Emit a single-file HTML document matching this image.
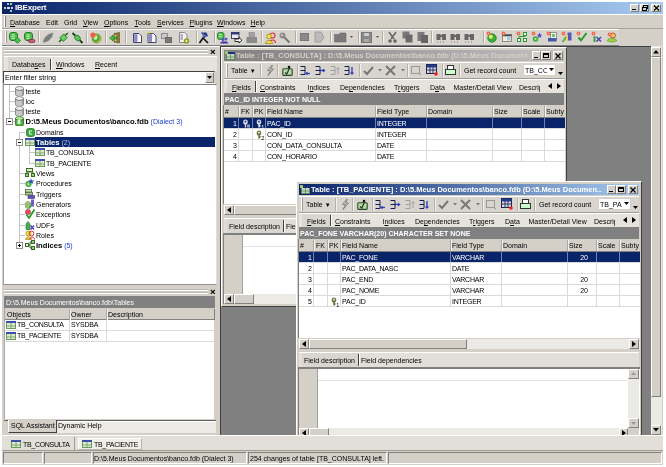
<!DOCTYPE html>
<html><head><meta charset="utf-8"><style>
html,body{margin:0;padding:0;width:666px;height:467px;overflow:hidden;background:#fff}
body{position:relative;font-family:"Liberation Sans",sans-serif;font-size:7px;color:#000}
div{position:absolute;box-sizing:border-box}
.t{white-space:nowrap}
u{text-decoration:underline;text-underline-offset:1px}
</style></head><body>
<div style="left:0;top:0;width:666px;height:467px;filter:blur(0.3px)">
<div style="left:2px;top:2px;width:661px;height:463px;background:#D4D0C8"></div>
<div style="left:2px;top:2px;width:661px;height:12px;background:linear-gradient(to right,#0A246A,#A6CAF0)"></div>
<svg style="position:absolute;left:3px;top:3px" width="11" height="10" viewBox="0 0 11 10"><rect x="4" y="0" width="2" height="2" fill="#9bd"/><rect x="7" y="0" width="2" height="2" fill="#9d9"/><rect x="1" y="4" width="2" height="2" fill="#bcd"/><rect x="4" y="4" width="3" height="2" fill="#dde"/><rect x="8" y="4" width="2" height="2" fill="#ccf"/><rect x="7" y="7" width="2" height="2" fill="#9c9"/></svg>
<div class="t" style="left:15px;top:2px;height:12px;line-height:12px;color:#fff;font-size:8px;letter-spacing:-0.2px"><b>IBExpert</b></div>
<div style="left:630px;top:4px;width:9px;height:8px;border:1px solid;border-color:#fff #808080 #808080 #fff;background:#D4D0C8;"></div>
<div style="left:640px;top:4px;width:9px;height:8px;border:1px solid;border-color:#fff #808080 #808080 #fff;background:#D4D0C8;"></div>
<div style="left:651px;top:4px;width:10px;height:8px;border:1px solid;border-color:#fff #808080 #808080 #fff;background:#D4D0C8;"></div>
<div style="left:632px;top:9px;width:4px;height:1px;background:#000"></div>
<svg style="position:absolute;left:642px;top:5px" width="6" height="6" viewBox="0 0 6 6"><rect x="1.5" y="0.5" width="4" height="3" fill="none" stroke="#000" stroke-width="1"/><rect x="0.5" y="2.5" width="4" height="3" fill="#D4D0C8" stroke="#000" stroke-width="1"/></svg>
<svg style="position:absolute;left:653px;top:5px" width="7" height="6" viewBox="0 0 7 6"><path d="M1 0.5L6 5.5M6 0.5L1 5.5" stroke="#000" stroke-width="1.1"/></svg>
<div style="left:2px;top:14px;width:661px;height:1px;background:#fff"></div>
<div style="left:2px;top:28px;width:661px;height:1px;background:#A8A49C"></div>
<div style="left:4px;top:16px;width:1px;height:11px;background:#fff"></div>
<div style="left:5px;top:16px;width:1px;height:11px;background:#808080"></div>
<div class="t" style="left:10px;top:18px;height:10px;line-height:10px;"><u>D</u>atabase</div>
<div class="t" style="left:46px;top:18px;height:10px;line-height:10px;">Edit</div>
<div class="t" style="left:64px;top:18px;height:10px;line-height:10px;">Grid</div>
<div class="t" style="left:83px;top:18px;height:10px;line-height:10px;"><u>V</u>iew</div>
<div class="t" style="left:104px;top:18px;height:10px;line-height:10px;"><u>O</u>ptions</div>
<div class="t" style="left:134.5px;top:18px;height:10px;line-height:10px;"><u>T</u>ools</div>
<div class="t" style="left:157px;top:18px;height:10px;line-height:10px;"><u>S</u>ervices</div>
<div class="t" style="left:189.5px;top:18px;height:10px;line-height:10px;"><u>P</u>lugins</div>
<div class="t" style="left:217px;top:18px;height:10px;line-height:10px;"><u>W</u>indows</div>
<div class="t" style="left:250.5px;top:18px;height:10px;line-height:10px;"><u>H</u>elp</div>
<div style="left:2px;top:29px;width:617px;height:17px;border-top:1px solid #fff;border-bottom:1px solid #808080;background:#D8D5CE"></div>
<div style="left:5px;top:31px;width:1px;height:12px;background:#fff"></div>
<div style="left:6px;top:31px;width:1px;height:12px;background:#9a968e"></div>
<div style="left:38px;top:31px;width:1px;height:12px;background:#B0ACA4"></div>
<div style="left:39px;top:31px;width:1px;height:12px;background:#F4F2EE"></div>
<div style="left:86px;top:31px;width:1px;height:12px;background:#B0ACA4"></div>
<div style="left:87px;top:31px;width:1px;height:12px;background:#F4F2EE"></div>
<div style="left:105px;top:31px;width:1px;height:12px;background:#B0ACA4"></div>
<div style="left:106px;top:31px;width:1px;height:12px;background:#F4F2EE"></div>
<div style="left:125px;top:31px;width:1px;height:12px;background:#B0ACA4"></div>
<div style="left:126px;top:31px;width:1px;height:12px;background:#F4F2EE"></div>
<div style="left:196px;top:31px;width:1px;height:12px;background:#B0ACA4"></div>
<div style="left:197px;top:31px;width:1px;height:12px;background:#F4F2EE"></div>
<div style="left:214px;top:31px;width:1px;height:12px;background:#B0ACA4"></div>
<div style="left:215px;top:31px;width:1px;height:12px;background:#F4F2EE"></div>
<div style="left:261px;top:31px;width:1px;height:12px;background:#B0ACA4"></div>
<div style="left:262px;top:31px;width:1px;height:12px;background:#F4F2EE"></div>
<div style="left:295px;top:31px;width:1px;height:12px;background:#B0ACA4"></div>
<div style="left:296px;top:31px;width:1px;height:12px;background:#F4F2EE"></div>
<div style="left:330px;top:31px;width:1px;height:12px;background:#B0ACA4"></div>
<div style="left:331px;top:31px;width:1px;height:12px;background:#F4F2EE"></div>
<div style="left:358px;top:31px;width:1px;height:12px;background:#B0ACA4"></div>
<div style="left:359px;top:31px;width:1px;height:12px;background:#F4F2EE"></div>
<div style="left:382px;top:31px;width:1px;height:12px;background:#B0ACA4"></div>
<div style="left:383px;top:31px;width:1px;height:12px;background:#F4F2EE"></div>
<div style="left:431px;top:31px;width:1px;height:12px;background:#B0ACA4"></div>
<div style="left:432px;top:31px;width:1px;height:12px;background:#F4F2EE"></div>
<div style="left:483px;top:31px;width:1px;height:12px;background:#B0ACA4"></div>
<div style="left:484px;top:31px;width:1px;height:12px;background:#F4F2EE"></div>
<svg style="position:absolute;left:9px;top:32px" width="12" height="12" viewBox="0 0 12 12"><rect x="0.5" y="0.5" width="8" height="8" rx="2.5" fill="#4cbf4c" stroke="#1d741d" stroke-width="0.9"/><path d="M2.5 2.8h3.2M2.5 4.6h3.2M2.5 6.4h3.2" stroke="#d4f4c8" stroke-width="0.9"/><path d="M5.5 8.5l3-3 3 3-3 3z" fill="#46c046" stroke="#1d741d" stroke-width="0.7"/></svg>
<svg style="position:absolute;left:24px;top:32px" width="12" height="12" viewBox="0 0 12 12"><rect x="0.5" y="0.5" width="8" height="8" rx="2.5" fill="#4cbf4c" stroke="#1d741d" stroke-width="0.9"/><path d="M2.5 2.8h3.2M2.5 4.6h3.2M2.5 6.4h3.2" stroke="#d4f4c8" stroke-width="0.9"/><rect x="4.5" y="7.5" width="6.5" height="3" rx="1.5" fill="#c8607a" stroke="#7a2038" stroke-width="0.7"/></svg>
<svg style="position:absolute;left:42px;top:32px" width="12" height="12" viewBox="0 0 12 12"><path d="M1 10.5C2 5 6 1.5 11 1C10.5 6 7 9.8 1 10.5Z" fill="#7c7c7c" stroke="#9a9a9a" stroke-width="0.6"/></svg>
<svg style="position:absolute;left:58px;top:32px" width="12" height="12" viewBox="0 0 12 12"><path d="M1 10L4 7M7 3.5L10 1" stroke="#1d6a1d" stroke-width="1.6"/><rect x="3" y="3" width="5" height="5.5" transform="rotate(45 5.5 5.75)" fill="#6ad06a" stroke="#1d6a1d" stroke-width="0.8"/></svg>
<svg style="position:absolute;left:72px;top:32px" width="12" height="12" viewBox="0 0 12 12"><path d="M0.5 1L3 3.5M8 8.5L10.5 11" stroke="#1a3a1a" stroke-width="1.8"/><ellipse cx="5.5" cy="6" rx="3.2" ry="2.4" transform="rotate(45 5.5 6)" fill="#5cc85c" stroke="#1d6a1d" stroke-width="0.8"/></svg>
<svg style="position:absolute;left:90px;top:32px" width="12" height="12" viewBox="0 0 12 12"><ellipse cx="6.5" cy="6.5" rx="4.5" ry="4.5" fill="#d8c040" stroke="#6a7a20" stroke-width="0.7"/><ellipse cx="6" cy="6" rx="3.5" ry="3.8" fill="#3aa83a"/><ellipse cx="5.5" cy="5.5" rx="2" ry="2.4" fill="#c8f0a8"/><circle cx="3" cy="3" r="2.6" fill="#f06040"/></svg>
<svg style="position:absolute;left:109px;top:32px" width="12" height="12" viewBox="0 0 12 12"><path d="M5 1.5L10.5 0.5V11L5 10Z" fill="#8a7a3a" stroke="#5a4a1a" stroke-width="0.6"/><path d="M6.5 3v6" stroke="#e8d870" stroke-width="1.5"/><path d="M0.5 6L4 3V5H8V7H4V9Z" fill="#46c046" stroke="#1d6a1d" stroke-width="0.6"/></svg>
<svg style="position:absolute;left:133px;top:32px" width="12" height="12" viewBox="0 0 12 12"><path d="M0.5 1.5H6L8.5 4V10.5H0.5Z" fill="#fff" stroke="#303060" stroke-width="0.9"/><rect x="1.2" y="2.2" width="3.3" height="7.6" fill="#8a86c8"/></svg>
<svg style="position:absolute;left:147px;top:31px" width="12" height="12" viewBox="0 0 12 12"><g transform="translate(0.5 1)"><path d="M0.5 1.5H6L8.5 4V10.5H0.5Z" fill="#fff" stroke="#303060" stroke-width="0.9"/><rect x="1.2" y="2.2" width="3.3" height="7.6" fill="#8a86c8"/></g><path d="M2 0V3M0.5 1.5H3.5" stroke="#e8d840" stroke-width="1"/></svg>
<svg style="position:absolute;left:161px;top:33px" width="12" height="12" viewBox="0 0 12 12"><rect x="0.5" y="0.5" width="6" height="5" fill="#c8c8c8" stroke="#8a8a8a"/><rect x="4.5" y="4.5" width="6" height="5" fill="#7a7a7a" stroke="#6a6a6a"/></svg>
<svg style="position:absolute;left:179px;top:32px" width="12" height="12" viewBox="0 0 12 12"><path d="M0.5 0.5H5.5L8 3V10.5H0.5Z" fill="#f4f4f0" stroke="#707070" stroke-width="0.8"/><rect x="1.5" y="2" width="2.5" height="6" fill="#b0b0c8"/><circle cx="7.5" cy="9" r="2.3" fill="#b8c020" stroke="#607010" stroke-width="0.7"/><circle cx="7.5" cy="9" r="0.8" fill="#fff"/></svg>
<svg style="position:absolute;left:199px;top:32px" width="12" height="12" viewBox="0 0 12 12"><path d="M2 0.5L7.5 0.5L9 4L5 6Z" fill="#2a3a8a"/><path d="M3 2L8 5" stroke="#a0a8e0" stroke-width="0.8"/><path d="M0.5 11L4 6L6 8L9 11" stroke="#101010" stroke-width="1.6" fill="none"/></svg>
<svg style="position:absolute;left:217px;top:32px" width="12" height="12" viewBox="0 0 12 12"><rect x="0.5" y="0.5" width="6.5" height="7" rx="2" fill="#4cbf4c" stroke="#1d741d" stroke-width="0.8"/><path d="M2 2.5h3M2 4.5h3" stroke="#d4f4c8" stroke-width="0.8"/><circle cx="6" cy="7.5" r="1.6" fill="#5a50c8"/><circle cx="9" cy="7" r="1.5" fill="#5a50c8"/><path d="M3.5 11.5C3.5 9 8.5 9 8.5 11.5M6.5 11.5C6.5 9 11 9 11 11.5" fill="#4a40b8" stroke="#2a2080" stroke-width="0.5"/></svg>
<svg style="position:absolute;left:231px;top:32px" width="12" height="12" viewBox="0 0 12 12"><rect x="0.5" y="0.5" width="7.5" height="6" fill="#e8e8f0" stroke="#202040" stroke-width="0.8"/><rect x="0.5" y="0.5" width="7.5" height="2" fill="#303880"/><path d="M4 7H8V5.5L11 8.2L8 11V9.5H4Z" fill="#fff" stroke="#000" stroke-width="0.8"/></svg>
<svg style="position:absolute;left:246px;top:32px" width="12" height="12" viewBox="0 0 12 12"><rect x="3" y="0.5" width="5.5" height="5" fill="#a0a0a0" stroke="#8a8a8a" stroke-width="0.6"/><rect x="0.5" y="5" width="10.5" height="6" fill="#8a8a8a"/></svg>
<svg style="position:absolute;left:265px;top:32px" width="12" height="12" viewBox="0 0 12 12"><circle cx="7.5" cy="3.5" r="2.5" fill="none" stroke="#e03030" stroke-width="1.2"/><path d="M4.5 11C4.5 7 10.5 7 10.5 11" fill="none" stroke="#e03030" stroke-width="1.2"/><circle cx="4" cy="4.5" r="2.4" fill="#f0e040" stroke="#807010" stroke-width="0.6"/><path d="M0.5 11.5C0.5 7.5 7.5 7.5 7.5 11.5Z" fill="#f0e040" stroke="#807010" stroke-width="0.6"/></svg>
<svg style="position:absolute;left:279px;top:32px" width="12" height="12" viewBox="0 0 12 12"><circle cx="3.5" cy="3.5" r="3" fill="#8a8a8a"/><circle cx="3" cy="3" r="1.2" fill="#c0c0c0"/><path d="M5.5 5.5L10.5 10.5" stroke="#7a7a7a" stroke-width="2.2"/></svg>
<svg style="position:absolute;left:299px;top:31px" width="12" height="12" viewBox="0 0 12 12"><rect x="1.5" y="2.5" width="8" height="7" fill="#8a8a8a" stroke="#777"/></svg>
<svg style="position:absolute;left:314px;top:31px" width="12" height="12" viewBox="0 0 12 12"><path d="M1 1H7L10 6L7 11H1Z" fill="#bbb" stroke="#999" stroke-width="0.8"/></svg>
<svg style="position:absolute;left:334px;top:31px" width="13" height="12" viewBox="0 0 13 12"><path d="M0.5 3.5H5L6 2H12V11H0.5Z" fill="#7a7a7a" stroke="#6a6a6a" stroke-width="0.6"/></svg>
<svg style="position:absolute;left:350px;top:31px" width="4" height="12" viewBox="0 0 4 12"><path d="M0 5h3l-1.5 2z" fill="#555"/></svg>
<svg style="position:absolute;left:361px;top:31px" width="12" height="12" viewBox="0 0 12 12"><rect x="0.5" y="1.5" width="10" height="10" fill="#888" stroke="#777"/><rect x="3" y="2" width="5" height="3" fill="#ccc"/><rect x="3" y="8" width="5" height="3" fill="#aaa"/></svg>
<svg style="position:absolute;left:376px;top:31px" width="4" height="12" viewBox="0 0 4 12"><path d="M0 5h3l-1.5 2z" fill="#555"/></svg>
<svg style="position:absolute;left:387px;top:31px" width="11" height="12" viewBox="0 0 11 12"><path d="M2 1L7 8M9 1L4 8" stroke="#666" stroke-width="1.5"/><circle cx="3" cy="10" r="1.8" fill="#666"/><circle cx="8" cy="10" r="1.8" fill="#666"/></svg>
<svg style="position:absolute;left:402px;top:31px" width="11" height="12" viewBox="0 0 11 12"><rect x="0.5" y="0.5" width="7" height="7" fill="#777"/><rect x="3.5" y="3.5" width="7" height="8" fill="#6a6a6a"/></svg>
<svg style="position:absolute;left:417px;top:31px" width="11" height="12" viewBox="0 0 11 12"><rect x="0.5" y="1" width="7" height="9" fill="#7a7a7a"/><rect x="4" y="4" width="7" height="8" fill="#666"/></svg>
<svg style="position:absolute;left:436px;top:31px" width="11" height="12" viewBox="0 0 11 12"><rect x="0.5" y="3" width="4" height="6" fill="#666"/><rect x="6" y="3" width="4" height="6" fill="#666"/><rect x="3" y="4" width="4" height="2" fill="#666"/><path d="M1 11h1M4 11h1M7 11h1" stroke="#777"/></svg>
<svg style="position:absolute;left:450px;top:31px" width="11" height="12" viewBox="0 0 11 12"><rect x="0.5" y="3" width="4" height="6" fill="#666"/><rect x="6" y="3" width="4" height="6" fill="#666"/><rect x="3" y="4" width="4" height="2" fill="#666"/><path d="M1 11h1M4 11h1M7 11h1" stroke="#777"/></svg>
<svg style="position:absolute;left:464px;top:31px" width="11" height="12" viewBox="0 0 11 12"><rect x="0.5" y="3" width="4" height="6" fill="#666"/><rect x="6" y="3" width="4" height="6" fill="#666"/><rect x="3" y="4" width="4" height="2" fill="#666"/><path d="M1 11h1M4 11h1M7 11h1" stroke="#777"/></svg>
<svg style="position:absolute;left:486px;top:31px" width="12" height="12" viewBox="0 0 12 12"><circle cx="6" cy="7" r="4.3" fill="#38b038" stroke="#1a6a2a" stroke-width="0.6"/><circle cx="4.8" cy="5.8" r="2" fill="#e8f070"/><circle cx="2.5" cy="2.5" r="1.9" fill="#f06848"/><circle cx="2.5" cy="2.5" r="0.7" fill="#ffb090"/></svg>
<svg style="position:absolute;left:501px;top:31px" width="12" height="12" viewBox="0 0 12 12"><rect x="1.5" y="3.5" width="9" height="7" fill="#f4f0d8" stroke="#6a6a5a" stroke-width="0.7"/><rect x="1.5" y="3.5" width="9" height="1.8" fill="#4a4a6a"/><rect x="6" y="6" width="3.5" height="3.5" fill="#a8c8e0"/><circle cx="2.5" cy="2.5" r="1.9" fill="#f06848"/><circle cx="2.5" cy="2.5" r="0.7" fill="#ffb090"/></svg>
<svg style="position:absolute;left:516px;top:31px" width="12" height="12" viewBox="0 0 12 12"><rect x="1.5" y="7.5" width="3" height="3" fill="#fff" stroke="#2a9a2a"/><rect x="7.5" y="7.5" width="3" height="3" fill="#fff" stroke="#2a9a2a"/><rect x="7.5" y="1.5" width="3" height="3" fill="#fff" stroke="#2a9a2a"/><path d="M3 7.5V5.5H9V4.5" stroke="#2a9a2a" fill="none"/><circle cx="2.5" cy="2.5" r="1.9" fill="#f06848"/><circle cx="2.5" cy="2.5" r="0.7" fill="#ffb090"/></svg>
<svg style="position:absolute;left:531px;top:31px" width="12" height="12" viewBox="0 0 12 12"><circle cx="4.5" cy="8" r="2.8" fill="#40b040"/><circle cx="4.5" cy="8" r="1" fill="#c0f0a0"/><path d="M8.5 1.5L9.3 3.5L11.3 3.7L9.8 5L10.3 7L8.5 6L6.7 7L7.2 5L5.7 3.7L7.7 3.5Z" fill="#5a48c8"/><circle cx="2.5" cy="2.5" r="1.9" fill="#f06848"/><circle cx="2.5" cy="2.5" r="0.7" fill="#ffb090"/></svg>
<svg style="position:absolute;left:546px;top:31px" width="12" height="12" viewBox="0 0 12 12"><rect x="4.5" y="1.5" width="6" height="8" fill="#f0f8f0" stroke="#5a5a5a" stroke-width="0.6"/><rect x="2" y="7" width="8.5" height="3.5" fill="#4858a8"/><rect x="6" y="3" width="3" height="3" fill="#70c070"/><circle cx="2.5" cy="2.5" r="1.9" fill="#f06848"/><circle cx="2.5" cy="2.5" r="0.7" fill="#ffb090"/></svg>
<svg style="position:absolute;left:561px;top:31px" width="12" height="12" viewBox="0 0 12 12"><rect x="6.5" y="1.5" width="4" height="8" fill="#5858b8"/><rect x="4" y="4" width="3" height="6" fill="#e8d070"/><path d="M1.5 11L5 6" stroke="#58b048" stroke-width="1.8"/><circle cx="2.5" cy="2.5" r="1.9" fill="#f06848"/><circle cx="2.5" cy="2.5" r="0.7" fill="#ffb090"/></svg>
<svg style="position:absolute;left:576px;top:31px" width="12" height="12" viewBox="0 0 12 12"><path d="M2.5 6.5L5 9.5L10.5 2" stroke="#2a9a2a" stroke-width="2" fill="none"/><circle cx="2.5" cy="2.5" r="1.9" fill="#f06848"/><circle cx="2.5" cy="2.5" r="0.7" fill="#ffb090"/></svg>
<svg style="position:absolute;left:591px;top:31px" width="12" height="12" viewBox="0 0 12 12"><path d="M5.5 6L10 10.5M10 6L5.5 10.5" stroke="#5040b8" stroke-width="1.6"/><rect x="2.5" y="5" width="2" height="6" fill="#38a838"/><circle cx="2.5" cy="2.5" r="1.9" fill="#f06848"/><circle cx="2.5" cy="2.5" r="0.7" fill="#ffb090"/></svg>
<svg style="position:absolute;left:606px;top:31px" width="12" height="12" viewBox="0 0 12 12"><path d="M1 9.5C3 6.5 8 6.5 11 9.5C8 11.5 4 11.5 1 9.5Z" fill="#a8d040" stroke="#3a9a2a" stroke-width="0.6"/><circle cx="7" cy="4.5" r="2.6" fill="#f0c060" stroke="#b03030" stroke-width="0.7"/><circle cx="3.5" cy="3.5" r="1.9" fill="#f06848"/><circle cx="3.5" cy="3.5" r="0.7" fill="#ffb090"/></svg>
<div style="left:2px;top:46px;width:218px;height:1px;background:#fff"></div>
<div style="left:4px;top:49px;width:204px;height:1px;background:#BCB8B0"></div>
<div style="left:4px;top:50px;width:204px;height:1px;background:#fff"></div>
<div style="left:4px;top:52px;width:204px;height:1px;background:#BCB8B0"></div>
<div style="left:4px;top:53px;width:204px;height:1px;background:#fff"></div>
<svg style="position:absolute;left:210px;top:49px" width="6" height="6" viewBox="0 0 6 6"><path d="M0.8 0.8L4.8 4.8M4.8 0.8L0.8 4.8" stroke="#000" stroke-width="1.1"/></svg>
<div style="left:4px;top:56px;width:213px;height:15px;background:#E6E3DC;border-top:1px solid #fff"></div>
<div style="left:8px;top:57px;width:42px;height:14px;background:#D9D6CF"></div>
<div style="left:50px;top:59px;width:1px;height:11px;background:#404040"></div>
<div style="left:51px;top:59px;width:1px;height:11px;background:#fff"></div>
<div class="t" style="left:12px;top:59px;height:11px;line-height:11px;">Databa<u>s</u>es</div>
<div class="t" style="left:56px;top:59px;height:11px;line-height:11px;"><u>W</u>indows</div>
<div class="t" style="left:95px;top:59px;height:11px;line-height:11px;"><u>R</u>ecent</div>
<div style="left:3px;top:71px;width:212px;height:13px;background:#fff;border:1px solid;border-color:#404040 #D4D0C8 #fff #404040"></div>
<div class="t" style="left:5px;top:72px;height:11px;line-height:11px;">Enter filter string</div>
<div style="left:205px;top:72px;width:9px;height:11px;border:1px solid;border-color:#fff #808080 #808080 #fff;background:#D4D0C8;"></div>
<svg style="position:absolute;left:207px;top:76px" width="5" height="3" viewBox="0 0 5 3"><path d="M0 0h5l-2.5 3z" fill="#000"/></svg>
<div style="left:3px;top:84px;width:214px;height:201px;background:#fff;border:1px solid;border-color:#808080 #E0DED8 #909090 #A0A0A0"></div>
<div style="left:9px;top:85px;width:1px;height:36px;background:#C4C4C4"></div>
<div style="left:9px;top:91px;width:6px;height:1px;background:#C4C4C4"></div>
<div style="left:9px;top:101px;width:6px;height:1px;background:#C4C4C4"></div>
<div style="left:9px;top:111px;width:6px;height:1px;background:#C4C4C4"></div>
<div style="left:9px;top:121px;width:6px;height:1px;background:#C4C4C4"></div>
<div style="left:19px;top:132px;width:1px;height:113px;background:#C4C4C4"></div>
<div style="left:19px;top:132px;width:6px;height:1px;background:#C4C4C4"></div>
<div style="left:19px;top:173px;width:6px;height:1px;background:#C4C4C4"></div>
<div style="left:19px;top:183px;width:6px;height:1px;background:#C4C4C4"></div>
<div style="left:19px;top:194px;width:6px;height:1px;background:#C4C4C4"></div>
<div style="left:19px;top:204px;width:6px;height:1px;background:#C4C4C4"></div>
<div style="left:19px;top:214px;width:6px;height:1px;background:#C4C4C4"></div>
<div style="left:19px;top:225px;width:6px;height:1px;background:#C4C4C4"></div>
<div style="left:19px;top:235px;width:6px;height:1px;background:#C4C4C4"></div>
<div style="left:29px;top:146px;width:1px;height:17px;background:#C4C4C4"></div>
<div style="left:29px;top:152px;width:6px;height:1px;background:#C4C4C4"></div>
<div style="left:29px;top:163px;width:6px;height:1px;background:#C4C4C4"></div>
<div style="left:6px;top:118px;width:7px;height:7px;background:#fff;border:1px solid #909090"></div>
<div style="left:8px;top:121px;width:3px;height:1px;background:#000"></div>
<div style="left:16px;top:139px;width:7px;height:7px;background:#fff;border:1px solid #909090"></div>
<div style="left:18px;top:142px;width:3px;height:1px;background:#000"></div>
<div style="left:16px;top:242px;width:7px;height:7px;background:#fff;border:1px solid #909090"></div>
<div style="left:18px;top:245px;width:3px;height:1px;background:#000"></div>
<div style="left:19px;top:244px;width:1px;height:3px;background:#000"></div>
<svg style="position:absolute;left:15px;top:86px" width="9" height="10" viewBox="0 0 9 10"><ellipse cx="4.5" cy="2.5" rx="4" ry="2" fill="#eee" stroke="#777" stroke-width="0.8"/><path d="M0.5 2.5V8.5A4 2 0 0 0 8.5 8.5V2.5A4 2 0 0 1 0.5 2.5Z" fill="#c8c8c8" stroke="#777" stroke-width="0.8"/><path d="M7.5 3V9" stroke="#999" stroke-width="1"/></svg>
<div class="t" style="left:25.5px;top:87px;height:10px;line-height:10px;">teste</div>
<svg style="position:absolute;left:15px;top:96px" width="9" height="10" viewBox="0 0 9 10"><ellipse cx="4.5" cy="2.5" rx="4" ry="2" fill="#eee" stroke="#777" stroke-width="0.8"/><path d="M0.5 2.5V8.5A4 2 0 0 0 8.5 8.5V2.5A4 2 0 0 1 0.5 2.5Z" fill="#c8c8c8" stroke="#777" stroke-width="0.8"/><path d="M7.5 3V9" stroke="#999" stroke-width="1"/></svg>
<div class="t" style="left:25.5px;top:97px;height:10px;line-height:10px;">loc</div>
<svg style="position:absolute;left:15px;top:106px" width="9" height="10" viewBox="0 0 9 10"><ellipse cx="4.5" cy="2.5" rx="4" ry="2" fill="#eee" stroke="#777" stroke-width="0.8"/><path d="M0.5 2.5V8.5A4 2 0 0 0 8.5 8.5V2.5A4 2 0 0 1 0.5 2.5Z" fill="#c8c8c8" stroke="#777" stroke-width="0.8"/><path d="M7.5 3V9" stroke="#999" stroke-width="1"/></svg>
<div class="t" style="left:25.5px;top:107px;height:10px;line-height:10px;">teste</div>
<svg style="position:absolute;left:15px;top:116px" width="9" height="10" viewBox="0 0 9 10"><ellipse cx="4.5" cy="2.5" rx="4" ry="2" fill="#b8e8a0" stroke="#2a6a1a" stroke-width="0.8"/><path d="M0.5 2.5V8.5A4 2 0 0 0 8.5 8.5V2.5A4 2 0 0 1 0.5 2.5Z" fill="#4caf3a" stroke="#2a6a1a" stroke-width="0.8"/><rect x="2.5" y="4" width="3" height="4" fill="#dfd"/></svg>
<div class="t" style="left:25.5px;top:117px;height:10px;line-height:10px;"><b style="font-size:7.65px">D:\5.Meus Documentos\banco.fdb</b> <span style="color:#2040c0">(Dialect 3)</span></div>
<svg style="position:absolute;left:26px;top:128px" width="9" height="9" viewBox="0 0 9 9"><rect x="0.5" y="0.5" width="8" height="8" rx="2" fill="#3cac3c" stroke="#1a6a1a" stroke-width="0.7"/><path d="M6 3H3.5V6H6" stroke="#dfd" fill="none"/></svg>
<div class="t" style="left:36px;top:128px;height:10px;line-height:10px;">Domains</div>
<svg style="position:absolute;left:25px;top:138px" width="10" height="8" viewBox="0 0 10 8"><rect x="0.5" y="0.5" width="9" height="7" fill="#dfe8d0" stroke="#6a9a5a" stroke-width="1"/><rect x="0" y="0" width="10" height="2" fill="#3c4fa8"/><path d="M5.0 2V8M0 5.0H10" stroke="#6a9a5a" stroke-width="0.8"/></svg>
<div style="left:35px;top:137px;width:180px;height:10px;background:#0A246A"></div>
<div class="t" style="left:36px;top:138px;height:10px;line-height:10px;color:#fff"><b style="font-size:7.6px">Tables</b> <span style="color:#A6CAF0">(2)</span></div>
<svg style="position:absolute;left:35px;top:148px" width="10" height="8" viewBox="0 0 10 8"><rect x="0.5" y="0.5" width="9" height="7" fill="#dfe8d0" stroke="#6a9a5a" stroke-width="1"/><rect x="0" y="0" width="10" height="2" fill="#3c4fa8"/><path d="M5.0 2V8M0 5.0H10" stroke="#6a9a5a" stroke-width="0.8"/></svg>
<div class="t" style="left:46px;top:148px;height:10px;line-height:10px;letter-spacing:-0.2px">TB_CONSULTA</div>
<svg style="position:absolute;left:35px;top:159px" width="10" height="8" viewBox="0 0 10 8"><rect x="0.5" y="0.5" width="9" height="7" fill="#dfe8d0" stroke="#6a9a5a" stroke-width="1"/><rect x="0" y="0" width="10" height="2" fill="#3c4fa8"/><path d="M5.0 2V8M0 5.0H10" stroke="#6a9a5a" stroke-width="0.8"/></svg>
<div class="t" style="left:46px;top:159px;height:10px;line-height:10px;letter-spacing:-0.2px">TB_PACIENTE</div>
<svg style="position:absolute;left:25px;top:168px" width="10" height="10" viewBox="0 0 10 10"><rect x="1.5" y="0.5" width="6" height="3" fill="#d8f0c8" stroke="#3a6a2a"/><rect x="0.5" y="5.5" width="3" height="3" fill="#8fd070" stroke="#3a6a2a"/><rect x="6.5" y="5.5" width="3" height="3" fill="#8fd070" stroke="#3a6a2a"/><path d="M2 4V5.5M8 4V5.5M2 4H8" stroke="#3a6a2a"/></svg>
<div class="t" style="left:36px;top:169px;height:10px;line-height:10px;">Views</div>
<svg style="position:absolute;left:25px;top:178px" width="10" height="10" viewBox="0 0 10 10"><circle cx="3.5" cy="6" r="2.8" fill="#58c048" stroke="#2a7a2a" stroke-width="0.6"/><circle cx="3.5" cy="6" r="1" fill="#c8f0a0"/><path d="M6 0.5L7 2.5L9.5 2.5L7.5 4L8.5 6L6 4.8L4 6L4.8 3.8L3 2.5L5.2 2.5Z" fill="#2850c8"/></svg>
<div class="t" style="left:36px;top:179px;height:10px;line-height:10px;">Procedures</div>
<svg style="position:absolute;left:25px;top:189px" width="10" height="10" viewBox="0 0 10 10"><rect x="0.5" y="0.5" width="6" height="2.5" fill="#d0e8c0" stroke="#4a6a3a" stroke-width="0.8"/><rect x="0.5" y="3.5" width="7" height="2.5" fill="#a8c898" stroke="#4a6a3a" stroke-width="0.8"/><rect x="3" y="6.5" width="6.5" height="3" fill="#6a50b0" stroke="#3a2a80" stroke-width="0.6"/></svg>
<div class="t" style="left:36px;top:190px;height:10px;line-height:10px;">Triggers</div>
<svg style="position:absolute;left:25px;top:199px" width="10" height="10" viewBox="0 0 10 10"><ellipse cx="3" cy="6" rx="2.8" ry="3.5" fill="#b8d890" stroke="#6a8a4a" stroke-width="0.7"/><path d="M2 4V8M4 4V8" stroke="#6a8a4a" stroke-width="0.7"/><rect x="6" y="0.5" width="3" height="7" fill="#7060c0"/><path d="M4 9.5L6 6.5" stroke="#38a838" stroke-width="1.5"/></svg>
<div class="t" style="left:36px;top:200px;height:10px;line-height:10px;">Generators</div>
<svg style="position:absolute;left:25px;top:209px" width="10" height="10" viewBox="0 0 10 10"><circle cx="3" cy="3" r="2.6" fill="#e05060" stroke="#a02030" stroke-width="0.5"/><path d="M1.5 5.5L4 9L9.5 0.5" stroke="#28a028" stroke-width="1.8" fill="none"/></svg>
<div class="t" style="left:36px;top:210px;height:10px;line-height:10px;">Exceptions</div>
<svg style="position:absolute;left:25px;top:220px" width="10" height="10" viewBox="0 0 10 10"><path d="M1 9.5V4L3 1.5L5 4V9.5Z" fill="#48b048" stroke="#2a6a2a" stroke-width="0.6"/><path d="M5.5 5.5L9 9.5M9 5.5L5.5 9.5" stroke="#5040c0" stroke-width="1.4"/></svg>
<div class="t" style="left:36px;top:221px;height:10px;line-height:10px;">UDFs</div>
<svg style="position:absolute;left:25px;top:230px" width="10" height="10" viewBox="0 0 10 10"><circle cx="3.5" cy="3.5" r="2.6" fill="#f0e040" stroke="#907010" stroke-width="0.6"/><circle cx="6.5" cy="3.5" r="2.4" fill="none" stroke="#e03030" stroke-width="1"/><path d="M0.5 9.5C0.5 6 6.5 6 6.5 9.5Z" fill="#f0c040" stroke="#a07010" stroke-width="0.6"/><path d="M5 9.5C5 6.5 9.5 6.5 9.5 9.5" fill="none" stroke="#e03030" stroke-width="1"/></svg>
<div class="t" style="left:36px;top:231px;height:10px;line-height:10px;">Roles</div>
<svg style="position:absolute;left:25px;top:240px" width="10" height="10" viewBox="0 0 10 10"><rect x="0.5" y="3.5" width="3" height="3" fill="#d8f0c8" stroke="#3a6a2a"/><rect x="6.5" y="0.5" width="3" height="3" fill="#8fd070" stroke="#3a6a2a"/><rect x="6.5" y="6.5" width="3" height="3" fill="#8fd070" stroke="#3a6a2a"/><path d="M3.5 5H5V2H6.5M5 5V8H6.5" stroke="#3a6a2a" fill="none"/></svg>
<div class="t" style="left:36px;top:241px;height:10px;line-height:10px;"><b style="font-size:7.6px">Indices</b> <span style="color:#2040c0">(5)</span></div>
<div style="left:4px;top:289px;width:204px;height:1px;background:#BCB8B0"></div>
<div style="left:4px;top:290px;width:204px;height:1px;background:#fff"></div>
<div style="left:4px;top:292px;width:204px;height:1px;background:#BCB8B0"></div>
<div style="left:4px;top:293px;width:204px;height:1px;background:#fff"></div>
<svg style="position:absolute;left:210px;top:289px" width="6" height="6" viewBox="0 0 6 6"><path d="M0.8 0.8L4.8 4.8M4.8 0.8L0.8 4.8" stroke="#000" stroke-width="1.1"/></svg>
<div style="left:4px;top:296px;width:211px;height:12px;background:#808080"></div>
<div class="t" style="left:6px;top:297.5px;height:10px;line-height:10px;color:#fff">D:\5.Meus Documentos\banco.fdb\Tables</div>
<div style="left:4px;top:308px;width:211px;height:111px;background:#fff;border-left:1px solid #A8A8A8;border-right:1px solid #D4D0C8"></div>
<div style="left:5px;top:308px;width:209px;height:12px;background:#D4D0C8;border-bottom:1px solid #808080"></div>
<div style="left:69px;top:309px;width:1px;height:11px;background:#A8A8A8"></div>
<div style="left:70px;top:309px;width:1px;height:11px;background:#F4F4F4"></div>
<div style="left:106px;top:309px;width:1px;height:11px;background:#A8A8A8"></div>
<div style="left:107px;top:309px;width:1px;height:11px;background:#F4F4F4"></div>
<div style="left:214px;top:309px;width:1px;height:11px;background:#808080"></div>
<div class="t" style="left:7px;top:310px;height:10px;line-height:10px;">Objects</div>
<div class="t" style="left:71px;top:310px;height:10px;line-height:10px;">Owner</div>
<div class="t" style="left:108px;top:310px;height:10px;line-height:10px;">Description</div>
<div style="left:5px;top:330px;width:209px;height:1px;background:#DADADA"></div>
<div style="left:69px;top:320px;width:1px;height:11px;background:#DADADA"></div>
<div style="left:106px;top:320px;width:1px;height:11px;background:#DADADA"></div>
<svg style="position:absolute;left:6px;top:321px" width="10" height="8" viewBox="0 0 10 8"><rect x="0.5" y="0.5" width="9" height="7" fill="#dfe8d0" stroke="#6a9a5a" stroke-width="1"/><rect x="0" y="0" width="10" height="2" fill="#3c4fa8"/><path d="M5.0 2V8M0 5.0H10" stroke="#6a9a5a" stroke-width="0.8"/></svg>
<div class="t" style="left:17px;top:320px;height:10px;line-height:10px;letter-spacing:-0.3px">TB_CONSULTA</div>
<div class="t" style="left:71px;top:320px;height:10px;line-height:10px;letter-spacing:-0.2px">SYSDBA</div>
<div style="left:5px;top:341px;width:209px;height:1px;background:#DADADA"></div>
<div style="left:69px;top:331px;width:1px;height:11px;background:#DADADA"></div>
<div style="left:106px;top:331px;width:1px;height:11px;background:#DADADA"></div>
<svg style="position:absolute;left:6px;top:332px" width="10" height="8" viewBox="0 0 10 8"><rect x="0.5" y="0.5" width="9" height="7" fill="#dfe8d0" stroke="#6a9a5a" stroke-width="1"/><rect x="0" y="0" width="10" height="2" fill="#3c4fa8"/><path d="M5.0 2V8M0 5.0H10" stroke="#6a9a5a" stroke-width="0.8"/></svg>
<div class="t" style="left:17px;top:331px;height:10px;line-height:10px;letter-spacing:-0.3px">TB_PACIENTE</div>
<div class="t" style="left:71px;top:331px;height:10px;line-height:10px;letter-spacing:-0.2px">SYSDBA</div>
<div style="left:57px;top:420px;width:159px;height:13px;background:#ECEAE4;border-top:1px solid #606060"></div>
<div style="left:58px;top:421px;width:158px;height:1px;background:#fff"></div>
<div style="left:4px;top:420px;width:4px;height:1px;background:#606060"></div>
<div style="left:8px;top:420px;width:49px;height:13px;background:#D4D0C8;border:1px solid;border-top:none;border-color:#fff #404040 #404040 #fff"></div>
<div class="t" style="left:11px;top:421px;height:10px;line-height:10px;">SQL Assistant</div>
<div class="t" style="left:58px;top:421px;height:10px;line-height:10px;">Dynamic Help</div>
<div style="left:2px;top:435px;width:661px;height:1px;background:#fff"></div>
<div style="left:2px;top:436px;width:661px;height:14px;background:#E2DFD8"></div>
<div style="left:5px;top:437px;width:70px;height:13px;border-right:1px solid #A09C94"></div>
<svg style="position:absolute;left:11px;top:440px" width="10" height="8" viewBox="0 0 10 8"><rect x="0.5" y="0.5" width="9" height="7" fill="#dfe8d0" stroke="#6a9a5a" stroke-width="1"/><rect x="0" y="0" width="10" height="2" fill="#3c4fa8"/><path d="M5.0 2V8M0 5.0H10" stroke="#6a9a5a" stroke-width="0.8"/></svg>
<div class="t" style="left:23px;top:439px;height:11px;line-height:11px;letter-spacing:-0.3px">TB_CONSULTA</div>
<div style="left:78px;top:438px;width:64px;height:12px;background:#F0EEE8;border:1px solid;border-color:#fff #B8B4AC #B8B4AC #fff"></div>
<svg style="position:absolute;left:82px;top:440px" width="10" height="8" viewBox="0 0 10 8"><rect x="0.5" y="0.5" width="9" height="7" fill="#dfe8d0" stroke="#6a9a5a" stroke-width="1"/><rect x="0" y="0" width="10" height="2" fill="#3c4fa8"/><path d="M5.0 2V8M0 5.0H10" stroke="#6a9a5a" stroke-width="0.8"/></svg>
<div class="t" style="left:94px;top:439px;height:11px;line-height:11px;letter-spacing:-0.3px">TB_PACIENTE</div>
<div style="left:2px;top:450px;width:661px;height:1px;background:#A09C94"></div>
<div style="left:3px;top:452px;width:40px;height:12px;border:1px solid;border-color:#808080 #fff #fff #808080"></div>
<div style="left:44px;top:452px;width:48px;height:12px;border:1px solid;border-color:#808080 #fff #fff #808080"></div>
<div style="left:93px;top:452px;width:154px;height:12px;border:1px solid;border-color:#808080 #fff #fff #808080"></div>
<div style="left:248px;top:452px;width:139px;height:12px;border:1px solid;border-color:#808080 #fff #fff #808080"></div>
<div style="left:388px;top:452px;width:274px;height:12px;border:1px solid;border-color:#808080 #fff #fff #808080"></div>
<div class="t" style="left:94px;top:453px;height:11px;line-height:11px;">D:\5.Meus Documentos\banco.fdb (Dialect 3)</div>
<div class="t" style="left:250px;top:453px;height:11px;line-height:11px;">254 changes of table [TB_CONSULTA] left.</div>
<div style="left:0;top:0;width:666px;height:435px;overflow:hidden">
<div style="left:220px;top:46px;width:431px;height:389px;background:#808080;border-left:1px solid #404040;border-top:1px solid #404040"></div>
<div style="left:651px;top:46px;width:11px;height:389px;background:#ECEAE4"></div>
<div style="left:651px;top:47px;width:10px;height:10px;border:1px solid;border-color:#fff #808080 #808080 #fff;background:#D4D0C8;"></div>
<svg style="position:absolute;left:653px;top:50px" width="6" height="4" viewBox="0 0 6 4"><path d="M0 3.5h6L3 0z" fill="#000"/></svg>
<div style="left:651px;top:57px;width:10px;height:340px;border:1px solid;border-color:#fff #808080 #808080 #fff;background:#D4D0C8;"></div>
<div style="left:651px;top:425px;width:10px;height:10px;border:1px solid;border-color:#fff #808080 #808080 #fff;background:#D4D0C8;"></div>
<svg style="position:absolute;left:653px;top:428px" width="6" height="4" viewBox="0 0 6 4"><path d="M0 0h6L3 3.5z" fill="#000"/></svg>
<div style="left:221px;top:47px;width:346px;height:260px;background:#D4D0C8;border:1px solid;border-color:#fff #404040 #404040 #fff"></div>
<div style="left:224px;top:50px;width:340px;height:11px;background:linear-gradient(to right,#808080,#C0C0C0)"></div>
<svg style="position:absolute;left:226px;top:52px" width="9" height="8" viewBox="0 0 9 8"><rect x="0.5" y="0.5" width="8" height="7" fill="#c8d8c0" stroke="#608858" stroke-width="1"/><rect x="0" y="0" width="9" height="2" fill="#203080"/><path d="M4.5 2V8M0 5.0H9" stroke="#608858" stroke-width="0.8"/></svg>
<svg style="position:absolute;left:225px;top:51px" width="4" height="4" viewBox="0 0 4 4"><rect width="3" height="3" fill="#9c6"/></svg>
<div class="t" style="left:236px;top:50px;height:11px;line-height:11px;color:#D4D0C8;font-weight:bold;font-size:7.5px;white-space:nowrap;overflow:hidden;width:291px">Table : [TB_CONSULTA] : D:\5.Meus Documentos\banco.fdb (D:\5.Meus Documentos\banco.fdb)</div>
<div style="left:532px;top:51px;width:9px;height:9px;border:1px solid;border-color:#fff #808080 #808080 #fff;background:#D4D0C8;"></div>
<div style="left:541px;top:51px;width:10px;height:9px;border:1px solid;border-color:#fff #808080 #808080 #fff;background:#D4D0C8;"></div>
<div style="left:553px;top:51px;width:10px;height:9px;border:1px solid;border-color:#fff #808080 #808080 #fff;background:#D4D0C8;"></div>
<div style="left:534px;top:57px;width:4px;height:1px;background:#000"></div>
<div style="left:543px;top:53px;width:6px;height:5px;border:1px solid #000;border-top-width:2px"></div>
<svg style="position:absolute;left:555px;top:53px" width="6" height="6" viewBox="0 0 6 6"><path d="M0.5 0.5L5.5 5.5M5.5 0.5L0.5 5.5" stroke="#000" stroke-width="1.2"/></svg>
<div style="left:224px;top:62px;width:340px;height:17px;background:#D8D5CE;border-top:1px solid #fff;border-bottom:1px solid #A09C94"></div>
<div style="left:226px;top:64px;width:1px;height:13px;background:#fff"></div>
<div style="left:227px;top:64px;width:1px;height:13px;background:#A09C94"></div>
<div class="t" style="left:231px;top:65px;height:12px;line-height:12px;">Table <span style="font-size:6px">&#9660;</span></div>
<div style="left:260px;top:64px;width:1px;height:13px;background:#B4B0A8"></div>
<div style="left:261px;top:64px;width:1px;height:13px;background:#F4F2EE"></div>
<div style="left:277px;top:64px;width:1px;height:13px;background:#B4B0A8"></div>
<div style="left:278px;top:64px;width:1px;height:13px;background:#F4F2EE"></div>
<div style="left:297px;top:64px;width:1px;height:13px;background:#B4B0A8"></div>
<div style="left:298px;top:64px;width:1px;height:13px;background:#F4F2EE"></div>
<div style="left:359px;top:64px;width:1px;height:13px;background:#B4B0A8"></div>
<div style="left:360px;top:64px;width:1px;height:13px;background:#F4F2EE"></div>
<div style="left:407px;top:64px;width:1px;height:13px;background:#B4B0A8"></div>
<div style="left:408px;top:64px;width:1px;height:13px;background:#F4F2EE"></div>
<div style="left:442px;top:64px;width:1px;height:13px;background:#B4B0A8"></div>
<div style="left:443px;top:64px;width:1px;height:13px;background:#F4F2EE"></div>
<div style="left:459px;top:64px;width:1px;height:13px;background:#B4B0A8"></div>
<div style="left:460px;top:64px;width:1px;height:13px;background:#F4F2EE"></div>
<svg style="position:absolute;left:265px;top:65px" width="10" height="11" viewBox="0 0 10 11"><path d="M6.5 0.5L2.5 5.5H5.5L3 10.5L8.5 4H5.5L7.5 0.5Z" fill="#d0d0d0" stroke="#707070" stroke-width="0.8"/></svg>
<svg style="position:absolute;left:282px;top:65px" width="11" height="11" viewBox="0 0 11 11"><rect x="0.8" y="3.8" width="9.4" height="6.6" rx="1" fill="#b8d8a8" stroke="#2a4a2a" stroke-width="1.1"/><path d="M3 7.5L4.8 9L7.5 3" stroke="#1a3a1a" stroke-width="1.1" fill="none"/><circle cx="7" cy="2" r="1.3" fill="#111"/></svg>
<svg style="position:absolute;left:300px;top:65px" width="11" height="11" viewBox="0 0 11 11"><path d="M0.5 1.5H5V9.5H0.5M0.5 5.5H5" stroke="#181c50" stroke-width="1" fill="none"/><path d="M5.5 8.5H10" stroke="#2838c0" stroke-width="1.2"/><circle cx="7" cy="8.5" r="1.3" fill="#2838c0"/></svg>
<svg style="position:absolute;left:315px;top:65px" width="11" height="11" viewBox="0 0 11 11"><path d="M0.5 1.5H5V9.5H0.5M0.5 5.5H5" stroke="#181c50" stroke-width="1" fill="none"/><path d="M5 5.5H8.5" stroke="#2838c0" stroke-width="1.4"/><path d="M8 3.5L10.5 5.5L8 7.5Z" fill="#2838c0"/></svg>
<svg style="position:absolute;left:330px;top:65px" width="11" height="11" viewBox="0 0 11 11"><path d="M0.5 1.5H5V9.5H0.5M0.5 5.5H5" stroke="#a0a0a0" stroke-width="1" fill="none"/><path d="M8 9V3M6.5 4.5L8 2.5L9.5 4.5" stroke="#a0a0a0" stroke-width="1" fill="none"/></svg>
<svg style="position:absolute;left:344px;top:65px" width="11" height="11" viewBox="0 0 11 11"><path d="M0.5 1.5H5V9.5H0.5M0.5 5.5H5" stroke="#181c50" stroke-width="1" fill="none"/><path d="M8 2V8" stroke="#2838c0" stroke-width="1.3"/><path d="M6 7.5L8 10L10 7.5Z" fill="#2838c0"/></svg>
<svg style="position:absolute;left:363px;top:65px" width="11" height="11" viewBox="0 0 11 11"><path d="M1 6L4 9L10 2" stroke="#777" stroke-width="2" fill="none"/></svg>
<svg style="position:absolute;left:378px;top:69px" width="4" height="3" viewBox="0 0 4 3"><path d="M0 0h4L2 2.5z" fill="#777"/></svg>
<svg style="position:absolute;left:385px;top:65px" width="11" height="11" viewBox="0 0 11 11"><path d="M1 1L10 10M10 1L1 10" stroke="#777" stroke-width="2"/></svg>
<svg style="position:absolute;left:401px;top:69px" width="4" height="3" viewBox="0 0 4 3"><path d="M0 0h4L2 2.5z" fill="#777"/></svg>
<svg style="position:absolute;left:411px;top:65px" width="11" height="11" viewBox="0 0 11 11"><rect x="0.5" y="1.5" width="8" height="7" fill="none" stroke="#999"/><path d="M7 8L10 10" stroke="#999"/></svg>
<svg style="position:absolute;left:426px;top:64px" width="12" height="12" viewBox="0 0 12 12"><rect x="0.5" y="0.5" width="10" height="9" fill="#d8dcf0" stroke="#223"/><rect x="0.5" y="0.5" width="10" height="3" fill="#223a90"/><path d="M4 3V10M7 3V10M0 6H11" stroke="#335"/><circle cx="10" cy="10" r="1.8" fill="#e22"/></svg>
<svg style="position:absolute;left:445px;top:65px" width="11" height="11" viewBox="0 0 11 11"><rect x="2.5" y="0.5" width="6" height="4" fill="#fff" stroke="#333"/><rect x="0.5" y="4.5" width="10" height="5" fill="#cfc" stroke="#333"/></svg>
<div class="t" style="left:464px;top:65px;height:12px;line-height:12px;">Get record count</div>
<div style="left:523px;top:64px;width:33px;height:12px;background:#fff;border:1px solid #D4D0C8"></div>
<div class="t" style="left:525px;top:65px;height:12px;line-height:12px;width:22px;overflow:hidden">TB_CO</div>
<svg style="position:absolute;left:549px;top:68px" width="5" height="3" viewBox="0 0 5 3"><path d="M0 0h5L2.5 3z" fill="#000"/></svg>
<svg style="position:absolute;left:558px;top:72px" width="5" height="3" viewBox="0 0 5 3"><path d="M0 0h5L2.5 3z" fill="#000"/></svg>
<div style="left:224px;top:79px;width:340px;height:14px;background:#E6E3DC;border-top:1px solid #fff"></div>
<div style="left:227px;top:80px;width:28px;height:13px;background:#D9D6CF"></div>
<div style="left:255px;top:81px;width:1px;height:11px;background:#404040"></div>
<div style="left:256px;top:81px;width:1px;height:11px;background:#fff"></div>
<div class="t" style="left:232px;top:82px;height:11px;line-height:11px;white-space:nowrap"><u>F</u>ields</div>
<div class="t" style="left:260px;top:82px;height:11px;line-height:11px;white-space:nowrap"><u>C</u>onstraints</div>
<div class="t" style="left:307.5px;top:82px;height:11px;line-height:11px;white-space:nowrap">I<u>n</u>dices</div>
<div class="t" style="left:340px;top:82px;height:11px;line-height:11px;white-space:nowrap">De<u>p</u>endencies</div>
<div class="t" style="left:394px;top:82px;height:11px;line-height:11px;white-space:nowrap">T<u>r</u>iggers</div>
<div class="t" style="left:430px;top:82px;height:11px;line-height:11px;white-space:nowrap">D<u>a</u>ta</div>
<div class="t" style="left:453.5px;top:82px;height:11px;line-height:11px;white-space:nowrap">Master/Detail View</div>
<div class="t" style="left:519px;top:82px;height:11px;line-height:11px;white-space:nowrap;width:21px;overflow:hidden">Descrip</div>
<svg style="position:absolute;left:548px;top:83px" width="4" height="6" viewBox="0 0 4 6"><path d="M4 0V6L0 3z" fill="#000"/></svg>
<svg style="position:absolute;left:557px;top:83px" width="4" height="6" viewBox="0 0 4 6"><path d="M0 0V6L4 3z" fill="#000"/></svg>
<div style="left:224px;top:93px;width:340px;height:12px;background:#808080"></div>
<div class="t" style="left:225px;top:94px;height:11px;line-height:11px;color:#fff;font-weight:bold">PAC_ID INTEGER NOT NULL</div>
<div style="left:223px;top:105px;width:342px;height:99px;background:#fff;border-left:1px solid #808080"></div>
<div style="left:224px;top:105px;width:341px;height:13px;background:#D4D0C8;border-bottom:1px solid #808080"></div>
<div style="left:238px;top:106px;width:1px;height:11px;background:#A8A8A8"></div>
<div style="left:239px;top:106px;width:1px;height:11px;background:#F4F4F4"></div>
<div style="left:252px;top:106px;width:1px;height:11px;background:#A8A8A8"></div>
<div style="left:253px;top:106px;width:1px;height:11px;background:#F4F4F4"></div>
<div style="left:265px;top:106px;width:1px;height:11px;background:#A8A8A8"></div>
<div style="left:266px;top:106px;width:1px;height:11px;background:#F4F4F4"></div>
<div style="left:375px;top:106px;width:1px;height:11px;background:#A8A8A8"></div>
<div style="left:376px;top:106px;width:1px;height:11px;background:#F4F4F4"></div>
<div style="left:426px;top:106px;width:1px;height:11px;background:#A8A8A8"></div>
<div style="left:427px;top:106px;width:1px;height:11px;background:#F4F4F4"></div>
<div style="left:492px;top:106px;width:1px;height:11px;background:#A8A8A8"></div>
<div style="left:493px;top:106px;width:1px;height:11px;background:#F4F4F4"></div>
<div style="left:521px;top:106px;width:1px;height:11px;background:#A8A8A8"></div>
<div style="left:522px;top:106px;width:1px;height:11px;background:#F4F4F4"></div>
<div style="left:544px;top:106px;width:1px;height:11px;background:#A8A8A8"></div>
<div style="left:545px;top:106px;width:1px;height:11px;background:#F4F4F4"></div>
<div class="t" style="left:225px;top:106px;height:11px;line-height:11px;white-space:nowrap">#</div>
<div class="t" style="left:241px;top:106px;height:11px;line-height:11px;white-space:nowrap">FK</div>
<div class="t" style="left:254px;top:106px;height:11px;line-height:11px;white-space:nowrap">PK</div>
<div class="t" style="left:267px;top:106px;height:11px;line-height:11px;white-space:nowrap">Field Name</div>
<div class="t" style="left:377px;top:106px;height:11px;line-height:11px;white-space:nowrap">Field Type</div>
<div class="t" style="left:428px;top:106px;height:11px;line-height:11px;white-space:nowrap">Domain</div>
<div class="t" style="left:494px;top:106px;height:11px;line-height:11px;white-space:nowrap">Size</div>
<div class="t" style="left:523px;top:106px;height:11px;line-height:11px;white-space:nowrap">Scale</div>
<div class="t" style="left:546px;top:106px;height:11px;line-height:11px;white-space:nowrap;width:18px;overflow:hidden">Subty</div>
<div style="left:224px;top:118px;width:341px;height:10px;background:#0A246A"></div>
<div style="left:238px;top:118px;width:1px;height:10px;background:#7080B0"></div>
<div style="left:252px;top:118px;width:1px;height:10px;background:#7080B0"></div>
<div style="left:265px;top:118px;width:1px;height:10px;background:#7080B0"></div>
<div style="left:375px;top:118px;width:1px;height:10px;background:#7080B0"></div>
<div style="left:426px;top:118px;width:1px;height:10px;background:#7080B0"></div>
<div style="left:492px;top:118px;width:1px;height:10px;background:#7080B0"></div>
<div style="left:521px;top:118px;width:1px;height:10px;background:#7080B0"></div>
<div style="left:544px;top:118px;width:1px;height:10px;background:#7080B0"></div>
<div style="left:224px;top:128px;width:341px;height:1px;background:#DADADA"></div>
<div class="t" style="left:227px;top:118px;height:11px;line-height:11px;color:#fff;width:10px;text-align:right">1</div>
<div class="t" style="left:267px;top:118px;height:11px;line-height:11px;color:#fff;letter-spacing:-0.2px">PAC_ID</div>
<div class="t" style="left:377px;top:118px;height:11px;line-height:11px;color:#fff;letter-spacing:-0.25px">INTEGER</div>
<svg style="position:absolute;left:256px;top:119px" width="9" height="10" viewBox="0 0 9 10"><ellipse cx="3" cy="3" rx="2.3" ry="2.6" fill="#fff" opacity="0.85"/><circle cx="3" cy="2.6" r="0.9" fill="#0A246A"/><path d="M3 5V8.5M3 7H4.5" stroke="#fff" stroke-width="1.3"/><text x="5.2" y="9.8" font-size="5.5" fill="#fff" font-family="Liberation Sans">1</text></svg>
<svg style="position:absolute;left:242px;top:119px" width="9" height="10" viewBox="0 0 9 10"><ellipse cx="3.5" cy="3" rx="2.3" ry="2.6" fill="#dde"/><circle cx="3.5" cy="2.6" r="0.9" fill="#0A246A"/><path d="M3.5 5V8.5" stroke="#dde" stroke-width="1.3"/><rect x="5" y="5.5" width="3" height="3" fill="#99b"/></svg>
<div style="left:224px;top:139px;width:341px;height:1px;background:#DADADA"></div>
<div style="left:238px;top:129px;width:1px;height:11px;background:#DADADA"></div>
<div style="left:252px;top:129px;width:1px;height:11px;background:#DADADA"></div>
<div style="left:265px;top:129px;width:1px;height:11px;background:#DADADA"></div>
<div style="left:375px;top:129px;width:1px;height:11px;background:#DADADA"></div>
<div style="left:426px;top:129px;width:1px;height:11px;background:#DADADA"></div>
<div style="left:492px;top:129px;width:1px;height:11px;background:#DADADA"></div>
<div style="left:521px;top:129px;width:1px;height:11px;background:#DADADA"></div>
<div style="left:544px;top:129px;width:1px;height:11px;background:#DADADA"></div>
<div class="t" style="left:227px;top:129px;height:11px;line-height:11px;color:#000;width:10px;text-align:right">2</div>
<div class="t" style="left:267px;top:129px;height:11px;line-height:11px;color:#000;letter-spacing:-0.2px">CON_ID</div>
<div class="t" style="left:377px;top:129px;height:11px;line-height:11px;color:#000;letter-spacing:-0.25px">INTEGER</div>
<svg style="position:absolute;left:256px;top:130px" width="9" height="10" viewBox="0 0 9 10"><ellipse cx="3" cy="3" rx="2.3" ry="2.6" fill="#5a5a20" opacity="0.85"/><circle cx="3" cy="2.6" r="0.9" fill="#fff"/><path d="M3 5V8.5M3 7H4.5" stroke="#5a5a20" stroke-width="1.3"/><text x="5.2" y="9.8" font-size="5.5" fill="#000" font-family="Liberation Sans">2</text></svg>
<div style="left:224px;top:150px;width:341px;height:1px;background:#DADADA"></div>
<div style="left:238px;top:140px;width:1px;height:11px;background:#DADADA"></div>
<div style="left:252px;top:140px;width:1px;height:11px;background:#DADADA"></div>
<div style="left:265px;top:140px;width:1px;height:11px;background:#DADADA"></div>
<div style="left:375px;top:140px;width:1px;height:11px;background:#DADADA"></div>
<div style="left:426px;top:140px;width:1px;height:11px;background:#DADADA"></div>
<div style="left:492px;top:140px;width:1px;height:11px;background:#DADADA"></div>
<div style="left:521px;top:140px;width:1px;height:11px;background:#DADADA"></div>
<div style="left:544px;top:140px;width:1px;height:11px;background:#DADADA"></div>
<div class="t" style="left:227px;top:140px;height:11px;line-height:11px;color:#000;width:10px;text-align:right">3</div>
<div class="t" style="left:267px;top:140px;height:11px;line-height:11px;color:#000;letter-spacing:-0.2px">CON_DATA_CONSULTA</div>
<div class="t" style="left:377px;top:140px;height:11px;line-height:11px;color:#000;letter-spacing:-0.25px">DATE</div>
<div style="left:224px;top:161px;width:341px;height:1px;background:#DADADA"></div>
<div style="left:238px;top:151px;width:1px;height:11px;background:#DADADA"></div>
<div style="left:252px;top:151px;width:1px;height:11px;background:#DADADA"></div>
<div style="left:265px;top:151px;width:1px;height:11px;background:#DADADA"></div>
<div style="left:375px;top:151px;width:1px;height:11px;background:#DADADA"></div>
<div style="left:426px;top:151px;width:1px;height:11px;background:#DADADA"></div>
<div style="left:492px;top:151px;width:1px;height:11px;background:#DADADA"></div>
<div style="left:521px;top:151px;width:1px;height:11px;background:#DADADA"></div>
<div style="left:544px;top:151px;width:1px;height:11px;background:#DADADA"></div>
<div class="t" style="left:227px;top:151px;height:11px;line-height:11px;color:#000;width:10px;text-align:right">4</div>
<div class="t" style="left:267px;top:151px;height:11px;line-height:11px;color:#000;letter-spacing:-0.2px">CON_HORARIO</div>
<div class="t" style="left:377px;top:151px;height:11px;line-height:11px;color:#000;letter-spacing:-0.25px">DATE</div>
<div style="left:224px;top:205px;width:341px;height:10px;background:#ECEAE4"></div>
<div style="left:224px;top:205px;width:10px;height:10px;border:1px solid;border-color:#fff #808080 #808080 #fff;background:#D4D0C8;"></div>
<svg style="position:absolute;left:227px;top:207px" width="4" height="6" viewBox="0 0 4 6"><path d="M4 0V6L0 3z" fill="#000"/></svg>
<div style="left:234px;top:205px;width:158px;height:10px;border:1px solid;border-color:#fff #808080 #808080 #fff;background:#D4D0C8;"></div>
<div style="left:554px;top:205px;width:10px;height:10px;border:1px solid;border-color:#fff #808080 #808080 #fff;background:#D4D0C8;"></div>
<svg style="position:absolute;left:557px;top:207px" width="4" height="6" viewBox="0 0 4 6"><path d="M0 0V6L4 3z" fill="#000"/></svg>
<div style="left:224px;top:218px;width:340px;height:1px;background:#fff"></div>
<div style="left:224px;top:218px;width:340px;height:15px;background:#E2DFD8;border-top:1px solid #fff"></div>
<div style="left:227px;top:219px;width:56px;height:14px;background:#D9D6CF"></div>
<div style="left:283px;top:220px;width:1px;height:12px;background:#404040"></div>
<div style="left:284px;top:220px;width:1px;height:12px;background:#fff"></div>
<div class="t" style="left:229px;top:221px;height:12px;line-height:12px;">Field description</div>
<div class="t" style="left:286px;top:221px;height:12px;line-height:12px;white-space:nowrap">Field dependencies</div>
<div style="left:223px;top:233px;width:342px;height:71px;background:#fff;border-top:2px solid #808080;border-left:1px solid #808080"></div>
<div style="left:224px;top:235px;width:19px;height:69px;background:#D4D0C8;border-right:1px solid #A0A0A0"></div>
<div style="left:243px;top:246px;width:309px;height:1px;background:#E4E4E4"></div>
<div style="left:553px;top:235px;width:11px;height:59px;background:#ECEAE4"></div>
<div style="left:553px;top:235px;width:11px;height:10px;border:1px solid;border-color:#fff #808080 #808080 #fff;background:#D4D0C8;"></div>
<svg style="position:absolute;left:556px;top:238px" width="5" height="3" viewBox="0 0 5 3"><path d="M0 3h5L2.5 0z" fill="#999"/></svg>
<div style="left:553px;top:284px;width:11px;height:10px;border:1px solid;border-color:#fff #808080 #808080 #fff;background:#D4D0C8;"></div>
<svg style="position:absolute;left:556px;top:288px" width="5" height="3" viewBox="0 0 5 3"><path d="M0 0h5L2.5 3z" fill="#999"/></svg>
<div style="left:224px;top:294px;width:329px;height:10px;background:#ECEAE4"></div>
<div style="left:224px;top:294px;width:10px;height:10px;border:1px solid;border-color:#fff #808080 #808080 #fff;background:#D4D0C8;"></div>
<svg style="position:absolute;left:227px;top:296px" width="4" height="6" viewBox="0 0 4 6"><path d="M4 0V6L0 3z" fill="#000"/></svg>
<div style="left:234px;top:294px;width:20px;height:10px;border:1px solid;border-color:#fff #808080 #808080 #fff;background:#D4D0C8;"></div>
<div style="left:544px;top:294px;width:9px;height:10px;border:1px solid;border-color:#fff #808080 #808080 #fff;background:#D4D0C8;"></div>
<svg style="position:absolute;left:547px;top:296px" width="4" height="6" viewBox="0 0 4 6"><path d="M0 0V6L4 3z" fill="#000"/></svg>
<div style="left:553px;top:294px;width:11px;height:10px;background:#D4D0C8"></div>
<div style="left:296px;top:181px;width:346px;height:260px;background:#D4D0C8;border:1px solid;border-color:#fff #404040 #404040 #fff"></div>
<div style="left:299px;top:184px;width:340px;height:11px;background:linear-gradient(to right,#0A246A,#A6CAF0)"></div>
<svg style="position:absolute;left:301px;top:186px" width="9" height="8" viewBox="0 0 9 8"><rect x="0.5" y="0.5" width="8" height="7" fill="#c8d8c0" stroke="#608858" stroke-width="1"/><rect x="0" y="0" width="9" height="2" fill="#203080"/><path d="M4.5 2V8M0 5.0H9" stroke="#608858" stroke-width="0.8"/></svg>
<svg style="position:absolute;left:300px;top:185px" width="4" height="4" viewBox="0 0 4 4"><rect width="3" height="3" fill="#9c6"/></svg>
<div class="t" style="left:311px;top:184px;height:11px;line-height:11px;color:#fff;font-weight:bold;font-size:7.5px;white-space:nowrap;overflow:hidden;width:291px">Table : [TB_PACIENTE] : D:\5.Meus Documentos\banco.fdb (D:\5.Meus Documen...</div>
<div style="left:607px;top:185px;width:9px;height:9px;border:1px solid;border-color:#fff #808080 #808080 #fff;background:#D4D0C8;"></div>
<div style="left:616px;top:185px;width:10px;height:9px;border:1px solid;border-color:#fff #808080 #808080 #fff;background:#D4D0C8;"></div>
<div style="left:628px;top:185px;width:10px;height:9px;border:1px solid;border-color:#fff #808080 #808080 #fff;background:#D4D0C8;"></div>
<div style="left:609px;top:191px;width:4px;height:1px;background:#000"></div>
<div style="left:618px;top:187px;width:6px;height:5px;border:1px solid #000;border-top-width:2px"></div>
<svg style="position:absolute;left:630px;top:187px" width="6" height="6" viewBox="0 0 6 6"><path d="M0.5 0.5L5.5 5.5M5.5 0.5L0.5 5.5" stroke="#000" stroke-width="1.2"/></svg>
<div style="left:299px;top:196px;width:340px;height:17px;background:#D8D5CE;border-top:1px solid #fff;border-bottom:1px solid #A09C94"></div>
<div style="left:301px;top:198px;width:1px;height:13px;background:#fff"></div>
<div style="left:302px;top:198px;width:1px;height:13px;background:#A09C94"></div>
<div class="t" style="left:306px;top:199px;height:12px;line-height:12px;">Table <span style="font-size:6px">&#9660;</span></div>
<div style="left:335px;top:198px;width:1px;height:13px;background:#B4B0A8"></div>
<div style="left:336px;top:198px;width:1px;height:13px;background:#F4F2EE"></div>
<div style="left:352px;top:198px;width:1px;height:13px;background:#B4B0A8"></div>
<div style="left:353px;top:198px;width:1px;height:13px;background:#F4F2EE"></div>
<div style="left:372px;top:198px;width:1px;height:13px;background:#B4B0A8"></div>
<div style="left:373px;top:198px;width:1px;height:13px;background:#F4F2EE"></div>
<div style="left:434px;top:198px;width:1px;height:13px;background:#B4B0A8"></div>
<div style="left:435px;top:198px;width:1px;height:13px;background:#F4F2EE"></div>
<div style="left:482px;top:198px;width:1px;height:13px;background:#B4B0A8"></div>
<div style="left:483px;top:198px;width:1px;height:13px;background:#F4F2EE"></div>
<div style="left:517px;top:198px;width:1px;height:13px;background:#B4B0A8"></div>
<div style="left:518px;top:198px;width:1px;height:13px;background:#F4F2EE"></div>
<div style="left:534px;top:198px;width:1px;height:13px;background:#B4B0A8"></div>
<div style="left:535px;top:198px;width:1px;height:13px;background:#F4F2EE"></div>
<svg style="position:absolute;left:340px;top:199px" width="10" height="11" viewBox="0 0 10 11"><path d="M6.5 0.5L2.5 5.5H5.5L3 10.5L8.5 4H5.5L7.5 0.5Z" fill="#d0d0d0" stroke="#707070" stroke-width="0.8"/></svg>
<svg style="position:absolute;left:357px;top:199px" width="11" height="11" viewBox="0 0 11 11"><rect x="0.8" y="3.8" width="9.4" height="6.6" rx="1" fill="#b8d8a8" stroke="#2a4a2a" stroke-width="1.1"/><path d="M3 7.5L4.8 9L7.5 3" stroke="#1a3a1a" stroke-width="1.1" fill="none"/><circle cx="7" cy="2" r="1.3" fill="#111"/></svg>
<svg style="position:absolute;left:375px;top:199px" width="11" height="11" viewBox="0 0 11 11"><path d="M0.5 1.5H5V9.5H0.5M0.5 5.5H5" stroke="#181c50" stroke-width="1" fill="none"/><path d="M5.5 8.5H10" stroke="#2838c0" stroke-width="1.2"/><circle cx="7" cy="8.5" r="1.3" fill="#2838c0"/></svg>
<svg style="position:absolute;left:390px;top:199px" width="11" height="11" viewBox="0 0 11 11"><path d="M0.5 1.5H5V9.5H0.5M0.5 5.5H5" stroke="#181c50" stroke-width="1" fill="none"/><path d="M5 5.5H8.5" stroke="#2838c0" stroke-width="1.4"/><path d="M8 3.5L10.5 5.5L8 7.5Z" fill="#2838c0"/></svg>
<svg style="position:absolute;left:405px;top:199px" width="11" height="11" viewBox="0 0 11 11"><path d="M0.5 1.5H5V9.5H0.5M0.5 5.5H5" stroke="#a0a0a0" stroke-width="1" fill="none"/><path d="M8 9V3M6.5 4.5L8 2.5L9.5 4.5" stroke="#a0a0a0" stroke-width="1" fill="none"/></svg>
<svg style="position:absolute;left:419px;top:199px" width="11" height="11" viewBox="0 0 11 11"><path d="M0.5 1.5H5V9.5H0.5M0.5 5.5H5" stroke="#181c50" stroke-width="1" fill="none"/><path d="M8 2V8" stroke="#2838c0" stroke-width="1.3"/><path d="M6 7.5L8 10L10 7.5Z" fill="#2838c0"/></svg>
<svg style="position:absolute;left:438px;top:199px" width="11" height="11" viewBox="0 0 11 11"><path d="M1 6L4 9L10 2" stroke="#777" stroke-width="2" fill="none"/></svg>
<svg style="position:absolute;left:453px;top:203px" width="4" height="3" viewBox="0 0 4 3"><path d="M0 0h4L2 2.5z" fill="#777"/></svg>
<svg style="position:absolute;left:460px;top:199px" width="11" height="11" viewBox="0 0 11 11"><path d="M1 1L10 10M10 1L1 10" stroke="#777" stroke-width="2"/></svg>
<svg style="position:absolute;left:476px;top:203px" width="4" height="3" viewBox="0 0 4 3"><path d="M0 0h4L2 2.5z" fill="#777"/></svg>
<svg style="position:absolute;left:486px;top:199px" width="11" height="11" viewBox="0 0 11 11"><rect x="0.5" y="1.5" width="8" height="7" fill="none" stroke="#999"/><path d="M7 8L10 10" stroke="#999"/></svg>
<svg style="position:absolute;left:501px;top:198px" width="12" height="12" viewBox="0 0 12 12"><rect x="0.5" y="0.5" width="10" height="9" fill="#d8dcf0" stroke="#223"/><rect x="0.5" y="0.5" width="10" height="3" fill="#223a90"/><path d="M4 3V10M7 3V10M0 6H11" stroke="#335"/><circle cx="10" cy="10" r="1.8" fill="#e22"/></svg>
<svg style="position:absolute;left:520px;top:199px" width="11" height="11" viewBox="0 0 11 11"><rect x="2.5" y="0.5" width="6" height="4" fill="#fff" stroke="#333"/><rect x="0.5" y="4.5" width="10" height="5" fill="#cfc" stroke="#333"/></svg>
<div class="t" style="left:539px;top:199px;height:12px;line-height:12px;">Get record count</div>
<div style="left:598px;top:198px;width:33px;height:12px;background:#fff;border:1px solid #D4D0C8"></div>
<div class="t" style="left:600px;top:199px;height:12px;line-height:12px;width:22px;overflow:hidden">TB_PA</div>
<svg style="position:absolute;left:624px;top:202px" width="5" height="3" viewBox="0 0 5 3"><path d="M0 0h5L2.5 3z" fill="#000"/></svg>
<svg style="position:absolute;left:633px;top:206px" width="5" height="3" viewBox="0 0 5 3"><path d="M0 0h5L2.5 3z" fill="#000"/></svg>
<div style="left:299px;top:213px;width:340px;height:14px;background:#E6E3DC;border-top:1px solid #fff"></div>
<div style="left:302px;top:214px;width:28px;height:13px;background:#D9D6CF"></div>
<div style="left:330px;top:215px;width:1px;height:11px;background:#404040"></div>
<div style="left:331px;top:215px;width:1px;height:11px;background:#fff"></div>
<div class="t" style="left:307px;top:216px;height:11px;line-height:11px;white-space:nowrap"><u>F</u>ields</div>
<div class="t" style="left:335px;top:216px;height:11px;line-height:11px;white-space:nowrap"><u>C</u>onstraints</div>
<div class="t" style="left:382.5px;top:216px;height:11px;line-height:11px;white-space:nowrap">I<u>n</u>dices</div>
<div class="t" style="left:415px;top:216px;height:11px;line-height:11px;white-space:nowrap">De<u>p</u>endencies</div>
<div class="t" style="left:469px;top:216px;height:11px;line-height:11px;white-space:nowrap">T<u>r</u>iggers</div>
<div class="t" style="left:505px;top:216px;height:11px;line-height:11px;white-space:nowrap">D<u>a</u>ta</div>
<div class="t" style="left:528.5px;top:216px;height:11px;line-height:11px;white-space:nowrap">Master/Detail View</div>
<div class="t" style="left:594px;top:216px;height:11px;line-height:11px;white-space:nowrap;width:21px;overflow:hidden">Descrip</div>
<svg style="position:absolute;left:623px;top:217px" width="4" height="6" viewBox="0 0 4 6"><path d="M4 0V6L0 3z" fill="#000"/></svg>
<svg style="position:absolute;left:632px;top:217px" width="4" height="6" viewBox="0 0 4 6"><path d="M0 0V6L4 3z" fill="#000"/></svg>
<div style="left:299px;top:227px;width:340px;height:12px;background:#808080"></div>
<div class="t" style="left:300px;top:228px;height:11px;line-height:11px;color:#fff;font-weight:bold">PAC_FONE VARCHAR(20) CHARACTER SET NONE</div>
<div style="left:298px;top:239px;width:342px;height:99px;background:#fff;border-left:1px solid #808080"></div>
<div style="left:299px;top:239px;width:341px;height:13px;background:#D4D0C8;border-bottom:1px solid #808080"></div>
<div style="left:313px;top:240px;width:1px;height:11px;background:#A8A8A8"></div>
<div style="left:314px;top:240px;width:1px;height:11px;background:#F4F4F4"></div>
<div style="left:327px;top:240px;width:1px;height:11px;background:#A8A8A8"></div>
<div style="left:328px;top:240px;width:1px;height:11px;background:#F4F4F4"></div>
<div style="left:340px;top:240px;width:1px;height:11px;background:#A8A8A8"></div>
<div style="left:341px;top:240px;width:1px;height:11px;background:#F4F4F4"></div>
<div style="left:450px;top:240px;width:1px;height:11px;background:#A8A8A8"></div>
<div style="left:451px;top:240px;width:1px;height:11px;background:#F4F4F4"></div>
<div style="left:501px;top:240px;width:1px;height:11px;background:#A8A8A8"></div>
<div style="left:502px;top:240px;width:1px;height:11px;background:#F4F4F4"></div>
<div style="left:567px;top:240px;width:1px;height:11px;background:#A8A8A8"></div>
<div style="left:568px;top:240px;width:1px;height:11px;background:#F4F4F4"></div>
<div style="left:596px;top:240px;width:1px;height:11px;background:#A8A8A8"></div>
<div style="left:597px;top:240px;width:1px;height:11px;background:#F4F4F4"></div>
<div style="left:619px;top:240px;width:1px;height:11px;background:#A8A8A8"></div>
<div style="left:620px;top:240px;width:1px;height:11px;background:#F4F4F4"></div>
<div class="t" style="left:300px;top:240px;height:11px;line-height:11px;white-space:nowrap">#</div>
<div class="t" style="left:316px;top:240px;height:11px;line-height:11px;white-space:nowrap">FK</div>
<div class="t" style="left:329px;top:240px;height:11px;line-height:11px;white-space:nowrap">PK</div>
<div class="t" style="left:342px;top:240px;height:11px;line-height:11px;white-space:nowrap">Field Name</div>
<div class="t" style="left:452px;top:240px;height:11px;line-height:11px;white-space:nowrap">Field Type</div>
<div class="t" style="left:503px;top:240px;height:11px;line-height:11px;white-space:nowrap">Domain</div>
<div class="t" style="left:569px;top:240px;height:11px;line-height:11px;white-space:nowrap">Size</div>
<div class="t" style="left:598px;top:240px;height:11px;line-height:11px;white-space:nowrap">Scale</div>
<div class="t" style="left:621px;top:240px;height:11px;line-height:11px;white-space:nowrap;width:18px;overflow:hidden">Subty</div>
<div style="left:299px;top:252px;width:341px;height:10px;background:#0A246A"></div>
<div style="left:313px;top:252px;width:1px;height:10px;background:#7080B0"></div>
<div style="left:327px;top:252px;width:1px;height:10px;background:#7080B0"></div>
<div style="left:340px;top:252px;width:1px;height:10px;background:#7080B0"></div>
<div style="left:450px;top:252px;width:1px;height:10px;background:#7080B0"></div>
<div style="left:501px;top:252px;width:1px;height:10px;background:#7080B0"></div>
<div style="left:567px;top:252px;width:1px;height:10px;background:#7080B0"></div>
<div style="left:596px;top:252px;width:1px;height:10px;background:#7080B0"></div>
<div style="left:619px;top:252px;width:1px;height:10px;background:#7080B0"></div>
<div style="left:299px;top:262px;width:341px;height:1px;background:#DADADA"></div>
<div class="t" style="left:302px;top:252px;height:11px;line-height:11px;color:#fff;width:10px;text-align:right">1</div>
<div class="t" style="left:342px;top:252px;height:11px;line-height:11px;color:#fff;letter-spacing:-0.2px">PAC_FONE</div>
<div class="t" style="left:452px;top:252px;height:11px;line-height:11px;color:#fff;letter-spacing:-0.25px">VARCHAR</div>
<div class="t" style="left:558px;top:252px;height:11px;line-height:11px;color:#fff;width:30px;text-align:right">20</div>
<div style="left:299px;top:273px;width:341px;height:1px;background:#DADADA"></div>
<div style="left:313px;top:263px;width:1px;height:11px;background:#DADADA"></div>
<div style="left:327px;top:263px;width:1px;height:11px;background:#DADADA"></div>
<div style="left:340px;top:263px;width:1px;height:11px;background:#DADADA"></div>
<div style="left:450px;top:263px;width:1px;height:11px;background:#DADADA"></div>
<div style="left:501px;top:263px;width:1px;height:11px;background:#DADADA"></div>
<div style="left:567px;top:263px;width:1px;height:11px;background:#DADADA"></div>
<div style="left:596px;top:263px;width:1px;height:11px;background:#DADADA"></div>
<div style="left:619px;top:263px;width:1px;height:11px;background:#DADADA"></div>
<div class="t" style="left:302px;top:263px;height:11px;line-height:11px;color:#000;width:10px;text-align:right">2</div>
<div class="t" style="left:342px;top:263px;height:11px;line-height:11px;color:#000;letter-spacing:-0.2px">PAC_DATA_NASC</div>
<div class="t" style="left:452px;top:263px;height:11px;line-height:11px;color:#000;letter-spacing:-0.25px">DATE</div>
<div style="left:299px;top:284px;width:341px;height:1px;background:#DADADA"></div>
<div style="left:313px;top:274px;width:1px;height:11px;background:#DADADA"></div>
<div style="left:327px;top:274px;width:1px;height:11px;background:#DADADA"></div>
<div style="left:340px;top:274px;width:1px;height:11px;background:#DADADA"></div>
<div style="left:450px;top:274px;width:1px;height:11px;background:#DADADA"></div>
<div style="left:501px;top:274px;width:1px;height:11px;background:#DADADA"></div>
<div style="left:567px;top:274px;width:1px;height:11px;background:#DADADA"></div>
<div style="left:596px;top:274px;width:1px;height:11px;background:#DADADA"></div>
<div style="left:619px;top:274px;width:1px;height:11px;background:#DADADA"></div>
<div class="t" style="left:302px;top:274px;height:11px;line-height:11px;color:#000;width:10px;text-align:right">3</div>
<div class="t" style="left:342px;top:274px;height:11px;line-height:11px;color:#000;letter-spacing:-0.2px">PAC_END</div>
<div class="t" style="left:452px;top:274px;height:11px;line-height:11px;color:#000;letter-spacing:-0.25px">VARCHAR</div>
<div class="t" style="left:558px;top:274px;height:11px;line-height:11px;color:#000;width:30px;text-align:right">20</div>
<div style="left:299px;top:295px;width:341px;height:1px;background:#DADADA"></div>
<div style="left:313px;top:285px;width:1px;height:11px;background:#DADADA"></div>
<div style="left:327px;top:285px;width:1px;height:11px;background:#DADADA"></div>
<div style="left:340px;top:285px;width:1px;height:11px;background:#DADADA"></div>
<div style="left:450px;top:285px;width:1px;height:11px;background:#DADADA"></div>
<div style="left:501px;top:285px;width:1px;height:11px;background:#DADADA"></div>
<div style="left:567px;top:285px;width:1px;height:11px;background:#DADADA"></div>
<div style="left:596px;top:285px;width:1px;height:11px;background:#DADADA"></div>
<div style="left:619px;top:285px;width:1px;height:11px;background:#DADADA"></div>
<div class="t" style="left:302px;top:285px;height:11px;line-height:11px;color:#000;width:10px;text-align:right">4</div>
<div class="t" style="left:342px;top:285px;height:11px;line-height:11px;color:#000;letter-spacing:-0.2px">PAC_NOME</div>
<div class="t" style="left:452px;top:285px;height:11px;line-height:11px;color:#000;letter-spacing:-0.25px">VARCHAR</div>
<div class="t" style="left:558px;top:285px;height:11px;line-height:11px;color:#000;width:30px;text-align:right">20</div>
<div style="left:299px;top:306px;width:341px;height:1px;background:#DADADA"></div>
<div style="left:313px;top:296px;width:1px;height:11px;background:#DADADA"></div>
<div style="left:327px;top:296px;width:1px;height:11px;background:#DADADA"></div>
<div style="left:340px;top:296px;width:1px;height:11px;background:#DADADA"></div>
<div style="left:450px;top:296px;width:1px;height:11px;background:#DADADA"></div>
<div style="left:501px;top:296px;width:1px;height:11px;background:#DADADA"></div>
<div style="left:567px;top:296px;width:1px;height:11px;background:#DADADA"></div>
<div style="left:596px;top:296px;width:1px;height:11px;background:#DADADA"></div>
<div style="left:619px;top:296px;width:1px;height:11px;background:#DADADA"></div>
<div class="t" style="left:302px;top:296px;height:11px;line-height:11px;color:#000;width:10px;text-align:right">5</div>
<div class="t" style="left:342px;top:296px;height:11px;line-height:11px;color:#000;letter-spacing:-0.2px">PAC_ID</div>
<div class="t" style="left:452px;top:296px;height:11px;line-height:11px;color:#000;letter-spacing:-0.25px">INTEGER</div>
<svg style="position:absolute;left:331px;top:297px" width="9" height="10" viewBox="0 0 9 10"><ellipse cx="3" cy="3" rx="2.3" ry="2.6" fill="#5a5a20" opacity="0.85"/><circle cx="3" cy="2.6" r="0.9" fill="#fff"/><path d="M3 5V8.5M3 7H4.5" stroke="#5a5a20" stroke-width="1.3"/><text x="5.2" y="9.8" font-size="5.5" fill="#000" font-family="Liberation Sans">1</text></svg>
<div style="left:299px;top:339px;width:341px;height:10px;background:#ECEAE4"></div>
<div style="left:299px;top:339px;width:10px;height:10px;border:1px solid;border-color:#fff #808080 #808080 #fff;background:#D4D0C8;"></div>
<svg style="position:absolute;left:302px;top:341px" width="4" height="6" viewBox="0 0 4 6"><path d="M4 0V6L0 3z" fill="#000"/></svg>
<div style="left:309px;top:339px;width:158px;height:10px;border:1px solid;border-color:#fff #808080 #808080 #fff;background:#D4D0C8;"></div>
<div style="left:629px;top:339px;width:10px;height:10px;border:1px solid;border-color:#fff #808080 #808080 #fff;background:#D4D0C8;"></div>
<svg style="position:absolute;left:632px;top:341px" width="4" height="6" viewBox="0 0 4 6"><path d="M0 0V6L4 3z" fill="#000"/></svg>
<div style="left:299px;top:352px;width:340px;height:1px;background:#fff"></div>
<div style="left:299px;top:352px;width:340px;height:15px;background:#E2DFD8;border-top:1px solid #fff"></div>
<div style="left:302px;top:353px;width:56px;height:14px;background:#D9D6CF"></div>
<div style="left:358px;top:354px;width:1px;height:12px;background:#404040"></div>
<div style="left:359px;top:354px;width:1px;height:12px;background:#fff"></div>
<div class="t" style="left:304px;top:355px;height:12px;line-height:12px;">Field description</div>
<div class="t" style="left:361px;top:355px;height:12px;line-height:12px;white-space:nowrap">Field dependencies</div>
<div style="left:298px;top:367px;width:342px;height:71px;background:#fff;border-top:2px solid #808080;border-left:1px solid #808080"></div>
<div style="left:299px;top:369px;width:19px;height:69px;background:#D4D0C8;border-right:1px solid #A0A0A0"></div>
<div style="left:318px;top:380px;width:309px;height:1px;background:#E4E4E4"></div>
<div style="left:628px;top:369px;width:11px;height:59px;background:#ECEAE4"></div>
<div style="left:628px;top:369px;width:11px;height:10px;border:1px solid;border-color:#fff #808080 #808080 #fff;background:#D4D0C8;"></div>
<svg style="position:absolute;left:631px;top:372px" width="5" height="3" viewBox="0 0 5 3"><path d="M0 3h5L2.5 0z" fill="#999"/></svg>
<div style="left:628px;top:418px;width:11px;height:10px;border:1px solid;border-color:#fff #808080 #808080 #fff;background:#D4D0C8;"></div>
<svg style="position:absolute;left:631px;top:422px" width="5" height="3" viewBox="0 0 5 3"><path d="M0 0h5L2.5 3z" fill="#999"/></svg>
<div style="left:299px;top:428px;width:329px;height:10px;background:#ECEAE4"></div>
<div style="left:299px;top:428px;width:10px;height:10px;border:1px solid;border-color:#fff #808080 #808080 #fff;background:#D4D0C8;"></div>
<svg style="position:absolute;left:302px;top:430px" width="4" height="6" viewBox="0 0 4 6"><path d="M4 0V6L0 3z" fill="#000"/></svg>
<div style="left:309px;top:428px;width:20px;height:10px;border:1px solid;border-color:#fff #808080 #808080 #fff;background:#D4D0C8;"></div>
<div style="left:619px;top:428px;width:9px;height:10px;border:1px solid;border-color:#fff #808080 #808080 #fff;background:#D4D0C8;"></div>
<svg style="position:absolute;left:622px;top:430px" width="4" height="6" viewBox="0 0 4 6"><path d="M0 0V6L4 3z" fill="#000"/></svg>
<div style="left:628px;top:428px;width:11px;height:10px;background:#D4D0C8"></div>
</div>
</div>
</body></html>
